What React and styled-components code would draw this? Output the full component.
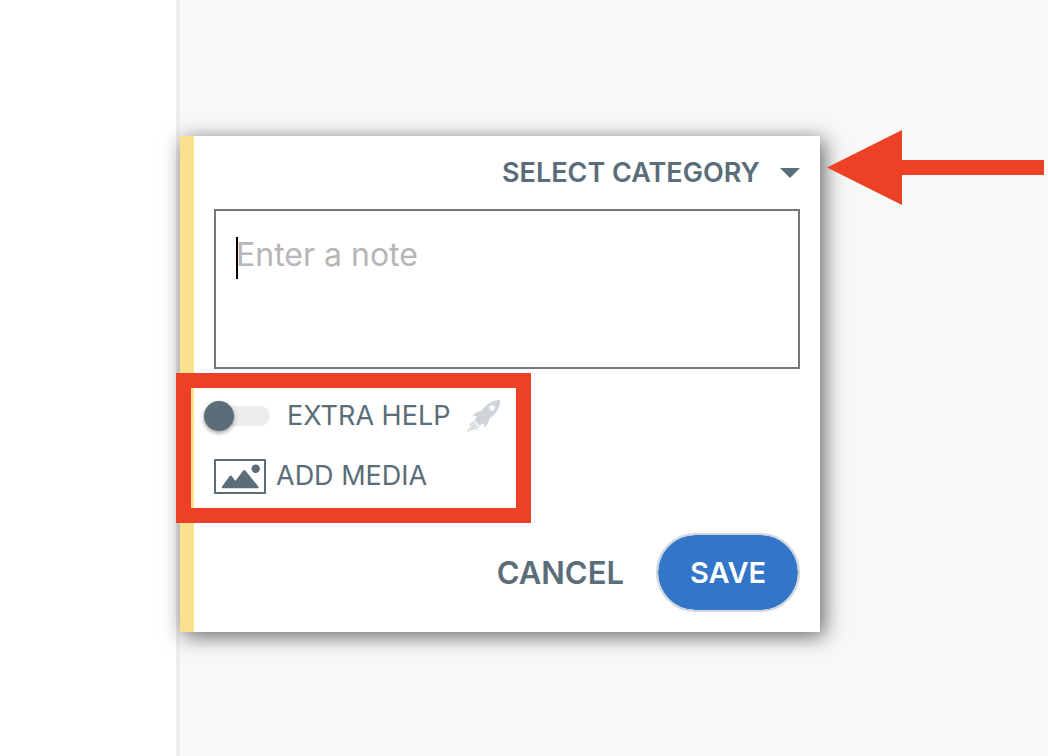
import React from "react";
import styled, { createGlobalStyle } from "styled-components";

const GlobalStyle = createGlobalStyle`
    * {
        box-sizing: border-box;
    }
    body {
        margin: 0;
        font-family: Inter, "Liberation Sans", sans-serif;
        color: #5a6d78;
        background: #ffffff;
    }
    button, select, textarea {
        font-family: inherit;
        color: inherit;
    }
`;

const Page = styled.div`
    display: flex;
    min-height: 100vh;
    overflow: hidden;
`;

const Sidebar = styled.aside`
    flex: 0 0 180px;
    border-right: 4px solid #eceeef;
`;

const Board = styled.main`
    flex: 1;
    min-width: 0;
    display: flex;
    align-items: flex-start;
    padding: 130px 4px 0 0;
    background: #f7f9f8;
`;

const Card = styled.form`
    flex: 0 1 640px;
    margin-top: 6px;
    padding: 0 20px 20px;
    border-left: 14px solid #fae18d;
    background: #ffffff;
    box-shadow: 4px 4px 20px rgba(0, 0, 0, 0.6);
`;

const CategoryRow = styled.div`
    display: flex;
    align-items: center;
    justify-content: flex-end;
    gap: 20px;
    height: 73px;
`;

const CategorySelect = styled.select`
    appearance: none;
    padding: 0;
    border: 0;
    background: none;
    font-size: 27px;
    font-weight: 600;
    line-height: 32px;
`;

const NoteField = styled.div`
    position: relative;
    display: flex;
`;

const NoteInput = styled.textarea`
    flex: 1;
    min-width: 0;
    height: 160px;
    padding: 23px 20px;
    border: 2px solid #777777;
    border-radius: 0;
    outline: 0;
    resize: none;
    font-size: 32px;
    line-height: 42px;
    &::placeholder {
        color: #b6b6b6;
        opacity: 1;
    }
`;

const Caret = styled.span`
    position: absolute;
    top: 28px;
    left: 22px;
    width: 2px;
    height: 42px;
    background: #000000;
`;

const Options = styled.div`
    width: fit-content;
    margin: 4px 0 10px -38px;
    padding: 0 15px 0 13px;
    border: 15px solid #ed4126;
`;

const OptionRow = styled.div`
    display: flex;
    align-items: center;
    height: 60px;
    gap: ${({gap}) => gap || '10px'};
    padding-left: ${({inset}) => inset || '0'};
    padding-bottom: 4px;
    font-size: 27px;
    line-height: 32px;
`;

const Toggle = styled.input`
    appearance: none;
    position: relative;
    width: 66px;
    height: 30px;
    margin: 0;
    &::before {
        content: '';
        position: absolute;
        inset: 5px 0 5px 6px;
        border-radius: 10px;
        background: #ebecee;
    }
    &::after {
        content: '';
        position: absolute;
        top: 0;
        left: 0;
        width: 30px;
        height: 30px;
        border-radius: 50%;
        background: #5a6d78;
        box-shadow: 0 2px 4px rgba(0, 0, 0, 0.4);
    }
    &:checked::after {
        left: 36px;
    }
`;

const MediaButton = styled.button`
    display: flex;
    align-items: center;
    gap: 10px;
    padding: 0;
    border: 0;
    background: none;
    font-size: 27px;
    line-height: 32px;
`;

const Actions = styled.div`
    display: flex;
    justify-content: flex-end;
    align-items: center;
    gap: 32px;
`;

const CancelButton = styled.button`
    padding: 0;
    border: 0;
    background: none;
    font-size: 31px;
    font-weight: 600;
`;

const SaveButton = styled.button`
    min-width: 144px;
    height: 79px;
    padding: 0 30px;
    border: 2px solid #d0d6da;
    border-radius: 40px;
    background: #3275c9;
    background-clip: padding-box;
    color: #ffffff;
    font-size: 29px;
    font-weight: 600;
`;

const Pointer = styled.div`
    flex: 1;
    display: flex;
    align-items: center;
    padding-left: 7px;
    z-index: 1;
    svg {
        flex: none;
    }
`;

const PointerShaft = styled.span`
    flex: 1;
    height: 15px;
    background: #ed4126;
`;

const DownIcon = () => (
    <svg width="20" height="10" viewBox="0 0 20 10" aria-hidden="true">
        <path d="M0 0h20L10 10z" fill="#5a6d78" />
    </svg>
);

const RocketIcon = () => (
    <svg width="34" height="34" viewBox="0 0 34 34" aria-hidden="true">
        <path
            fill="#ced4d8"
            fillRule="evenodd"
            d="M33 1C26 1 19.500 4.500 14.500 11.800C11 12 8 14 5.200 17.300L9.600 17C9.300 18.800 8.500 20 7.500 21.500L12.600 26.500C14 25.500 15.500 24.700 17.200 24.200L17 28.500C20.500 25.800 22 23.200 22.300 19.600C29.500 14.800 33.500 8.500 33 1ZM25.200 6.300a2.700 2.700 0 1 1 0 5.400a2.700 2.700 0 1 1 0-5.400Z"
        />
        <path
            fill="none"
            stroke="#ced4d8"
            strokeWidth="1.500"
            d="M6.800 22.500L2.500 26.800M8.400 24.100L.8 32.600M10 25.500L4.200 31.500M11.600 27L8 30.500"
        />
    </svg>
);

const MediaIcon = () => (
    <svg width="52" height="35" viewBox="0 0 52 35" aria-hidden="true">
        <rect x="1" y="1" width="50" height="33" fill="none" stroke="#5a6d78" strokeWidth="2" />
        <path
            fill="#5a6d78"
            d="M8.500 29.200Q7.200 28.700 8.400 27.100L15.300 17.400Q16.700 15.700 18.100 17.400L21.400 22L28.900 12Q30.300 10.200 31.700 12L44.300 27.500Q45.300 28.900 43.900 29.200Z"
        />
        <circle cx="41.700" cy="9.800" r="4.200" fill="#5a6d78" />
    </svg>
);

function NoteCard() {
    return (
        <Card onSubmit={(e) => e.preventDefault()}>
            <CategoryRow>
                <CategorySelect aria-label="Category">
                    <option>SELECT CATEGORY</option>
                </CategorySelect>
                <DownIcon />
            </CategoryRow>
            <NoteField>
                <NoteInput aria-label="Note" placeholder="Enter a note" />
                <Caret />
            </NoteField>
            <Options>
                <OptionRow gap="17px">
                    <Toggle type="checkbox" id="extra-help" />
                    <label htmlFor="extra-help">EXTRA HELP</label>
                    <RocketIcon />
                </OptionRow>
                <OptionRow inset="10px">
                    <MediaButton type="button">
                        <MediaIcon />
                        ADD MEDIA
                    </MediaButton>
                </OptionRow>
            </Options>
            <Actions>
                <CancelButton type="button">CANCEL</CancelButton>
                <SaveButton type="submit">SAVE</SaveButton>
            </Actions>
        </Card>
    );
}

function App() {
    return (
        <>
            <GlobalStyle />
            <Page>
                <Sidebar />
                <Board>
                    <NoteCard />
                    <Pointer>
                        <svg width="75" height="75" viewBox="0 0 75 75" aria-hidden="true">
                            <path d="M75 0v75L0 37.500z" fill="#ed4126" />
                        </svg>
                        <PointerShaft />
                    </Pointer>
                </Board>
            </Page>
        </>
    );
}

export default App;
